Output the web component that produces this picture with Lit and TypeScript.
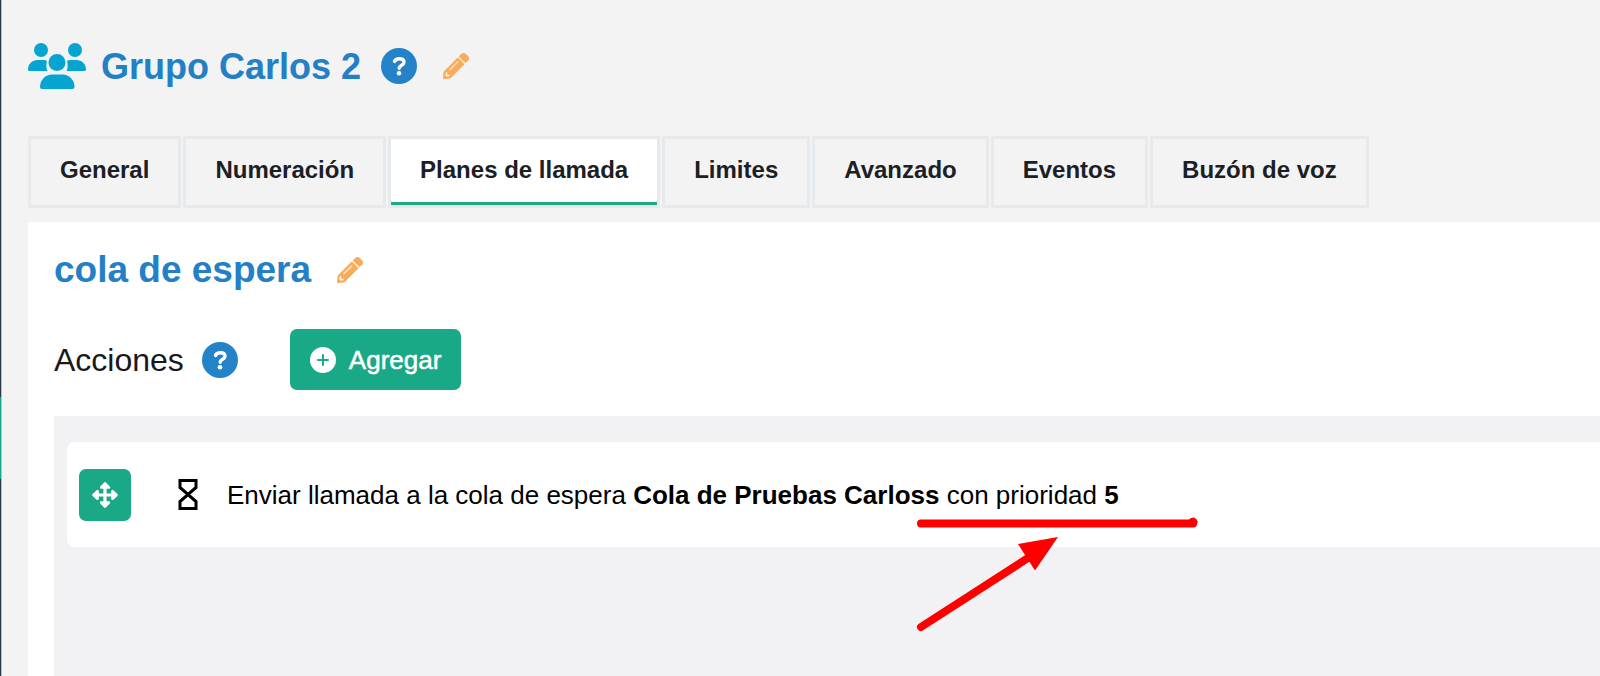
import { LitElement, html, css } from "lit";
import { customElement, property, state } from "lit/decorators.js";

const helpIcon = html`<svg viewBox="0 0 36 36" aria-hidden="true"><circle cx="18" cy="18" r="18" fill="currentColor"/><path d="M13.500 13.500c.8-2 2.200-2.700 4.700-2.700 3 0 4.800 1.300 4.800 3.500 0 3.200-4.800 2.800-4.800 6" fill="none" stroke="#fff" stroke-width="3.400" stroke-linecap="round"/><circle cx="18" cy="25.200" r="2.300" fill="#fff"/></svg>`;

const pencilIcon = html`<svg viewBox="0 0 512 512" aria-hidden="true"><path fill="currentColor" stroke="currentColor" stroke-width="12" d="M497.900 142.100l-46.100 46.100c-4.700 4.700-12.300 4.700-17 0l-111-111c-4.700-4.700-4.700-12.300 0-17l46.100-46.100c18.700-18.700 49.100-18.700 67.900 0l60.100 60.100c18.800 18.700 18.800 49.100 0 67.900zM284.200 99.800L21.600 362.400.4 483.900c-2.900 16.400 11.400 30.600 27.800 27.800l121.500-21.300 262.600-262.600c4.700-4.700 4.700-12.300 0-17l-111-111c-4.800-4.700-12.400-4.700-17.100 0zM124.100 339.900c-5.500-5.500-5.500-14.300 0-19.800l154-154c5.500-5.500 14.300-5.500 19.800 0s5.500 14.300 0 19.800l-154 154c-5.500 5.500-14.300 5.500-19.800 0zM88 424h48v36.300l-64.500 11.300-31.100-31.100L51.700 376H88v48z"/></svg>`;

const usersIcon = html`<svg viewBox="0 0 58 46" aria-hidden="true"><g fill="currentColor"><circle cx="13" cy="7" r="7"/><circle cx="47" cy="7" r="7"/><circle cx="29" cy="19.500" r="8.500"/><path d="M1.500 28A1.500 1.500 0 0 1 0 26.500C0 21 4.300 17 9.500 17h6.200c1 0 2.200.2 3.200.7-.7 4.200-.9 7.800.5 10.300z"/><path d="M56.500 28a1.500 1.500 0 0 0 1.500-1.500C58 21 53.700 17 48.500 17h-6.200c-1 0-2.200.2-3.200.7.7 4.200.9 7.800-.5 10.300z"/><path d="M14 46a2 2 0 0 1-2-2c0-7 5.500-12.500 12-12.500h10.500c6.500 0 12 5.500 12 12.500a2 2 0 0 1-2 2z"/></g></svg>`;

const plusIcon = html`<svg viewBox="0 0 26 26" aria-hidden="true"><circle cx="13" cy="13" r="13" fill="#fff"/><path d="M13 8v10M8 13h10" stroke="#19a987" stroke-width="2" stroke-linecap="round"/></svg>`;

const moveIcon = html`<svg viewBox="0 0 26 26" aria-hidden="true"><path d="M13 4v18M4 13h18" stroke="#fff" stroke-width="3.200"/><path fill="#fff" stroke="#fff" stroke-width="2.600" stroke-linejoin="round" d="M13 1.500l3.800 4H9.200zM13 24.500l3.800-4H9.200zM1.500 13l4-3.800v7.600zM24.500 13l-4-3.800v7.600z"/></svg>`;

const hourglassIcon = html`<svg viewBox="0 0 20 31" aria-hidden="true"><path d="M2 1.500h16V8.500l-8 7-8-7zM2 29.500h16V22.500l-8-7-8 7z" fill="none" stroke="#000" stroke-width="3"/></svg>`;

@customElement("tab-bar")
class TabBar extends LitElement {
  @property({ type: Array }) tabs: string[] = [];
  @state() private active = 2;

  static styles = css`
    .tabs { display: flex; flex-wrap: wrap; gap: 2px; }
    .tab {
      box-sizing: border-box; height: 72px; padding: 0 29px 4px;
      border: 3px solid #e7eaec; background: #f3f3f4; color: #1b2024;
      font: bold 24px/28px "Liberation Sans", Arial, sans-serif; cursor: pointer;
    }
    .tab.active { background: #fff; box-shadow: inset 0 -3px #1ea883; }
  `;

  render() {
    return html`<div class="tabs" role="tablist">
      ${this.tabs.map((name, i) => html`<button role="tab" aria-selected=${i === this.active ? "true" : "false"}
        class=${i === this.active ? "tab active" : "tab"} @click=${() => (this.active = i)}>${name}</button>`)}
    </div>`;
  }
}

@customElement("app-root")
class AppRoot extends LitElement {
  static styles = css`
    :host {
      display: flex; min-height: 100vh; background: #f3f3f4; color: #17191c; overflow: hidden;
      font-family: "Liberation Sans", Arial, sans-serif;
    }
    * { box-sizing: border-box; }
    svg { display: block; width: 100%; height: 100%; }
    button { font-family: inherit; border: 0; padding: 0; background: none; cursor: pointer; }
    h1, h2, h3, p { margin: 0; }
    .rail { flex: none; width: 2px; display: flex; flex-direction: column; background: #2a3845; border-right: 1px solid #b9bfca; }
    .rail-space { height: 397px; }
    .rail-active { height: 82px; background: #19a987; }
    main { flex: 1; min-width: 0; display: flex; flex-direction: column; padding: 40px 0 0 26px; }
    .heading { display: flex; align-items: center; height: 52px; margin-bottom: 44px; }
    h1, h2 { color: #2380c6; line-height: 44px; }
    h1 { font-size: 36px; padding-top: 2px; }
    h2 { font-size: 37px; }
    .users { width: 58px; height: 46px; color: #06a4d0; margin-right: 15px; }
    .help { width: 36px; height: 36px; color: #2482c8; margin-left: 18px; }
    .heading .help { margin-left: 20px; }
    .edit { width: 26px; height: 26px; color: #f8ac59; margin-left: 26px; }
    .panel { flex: 1; display: flex; flex-direction: column; margin-top: 14px; padding: 26px 0 0 26px; background: #fff; }
    .subheading { display: flex; align-items: center; height: 44px; }
    .actions { display: flex; align-items: center; height: 61px; margin: 37px 0 26px; }
    h3 { font-size: 32px; font-weight: 400; line-height: 40px; }
    .add {
      display: flex; align-items: center; gap: 13px; height: 61px; padding: 0 20px; margin-left: 52px;
      border-radius: 7px; background: #19a987; color: #fff; font-size: 26px; line-height: 32px;
      -webkit-text-stroke: 0.5px #fff;
    }
    .plus { width: 26px; height: 26px; }
    .list { flex: 1; padding: 26px 0 0 13px; background: #f2f2f4; }
    .row {
      display: flex; align-items: center; height: 105px; padding-left: 12px;
      background: #fff; border-radius: 8px 0 0 8px; color: #000; position: relative;
    }
    .move { display: grid; place-items: center; width: 52px; height: 52px; border-radius: 7px; background: #19a987; }
    .arrows { width: 26px; height: 26px; }
    .hourglass { width: 20px; height: 31px; margin: 0 29px 0 47px; }
    .row p { font-size: 26px; line-height: 32px; white-space: nowrap; }
    .mark { position: absolute; left: 848px; top: 74px; width: 286px; height: 116px; }
  `;

  render() {
    return html`
      <div class="rail"><div class="rail-space"></div><div class="rail-active"></div></div>
      <main>
        <header class="heading">
          <div class="users">${usersIcon}</div>
          <h1>Grupo Carlos 2</h1>
          <button class="help" aria-label="Ayuda">${helpIcon}</button>
          <button class="edit" aria-label="Editar">${pencilIcon}</button>
        </header>
        <tab-bar .tabs=${["General", "Numeración", "Planes de llamada", "Limites", "Avanzado", "Eventos", "Buzón de voz"]}></tab-bar>
        <section class="panel">
          <div class="subheading">
            <h2>cola de espera</h2>
            <button class="edit" aria-label="Editar">${pencilIcon}</button>
          </div>
          <div class="actions">
            <h3>Acciones</h3>
            <button class="help" aria-label="Ayuda">${helpIcon}</button>
            <button class="add"><span class="plus">${plusIcon}</span>Agregar</button>
          </div>
          <div class="list">
            <div class="row">
              <button class="move" aria-label="Mover"><span class="arrows">${moveIcon}</span></button>
              <span class="hourglass">${hourglassIcon}</span>
              <p>Enviar llamada a la cola de espera <b>Cola de Pruebas Carloss</b> con prioridad <b>5</b></p>
              <div class="mark">
                <svg viewBox="0 0 286 116" aria-hidden="true">
                  <g fill="#fe0000" stroke="#fe0000" stroke-linecap="round">
                    <path d="M6 7.500H278" stroke-width="8"/><circle cx="278" cy="6" r="4"/>
                    <path d="M6 111L116 40" stroke-width="8"/>
                    <path d="M143 21L103 28L120 54.500z" stroke="none"/>
                  </g>
                </svg>
              </div>
            </div>
          </div>
        </section>
      </main>
    `;
  }
}
